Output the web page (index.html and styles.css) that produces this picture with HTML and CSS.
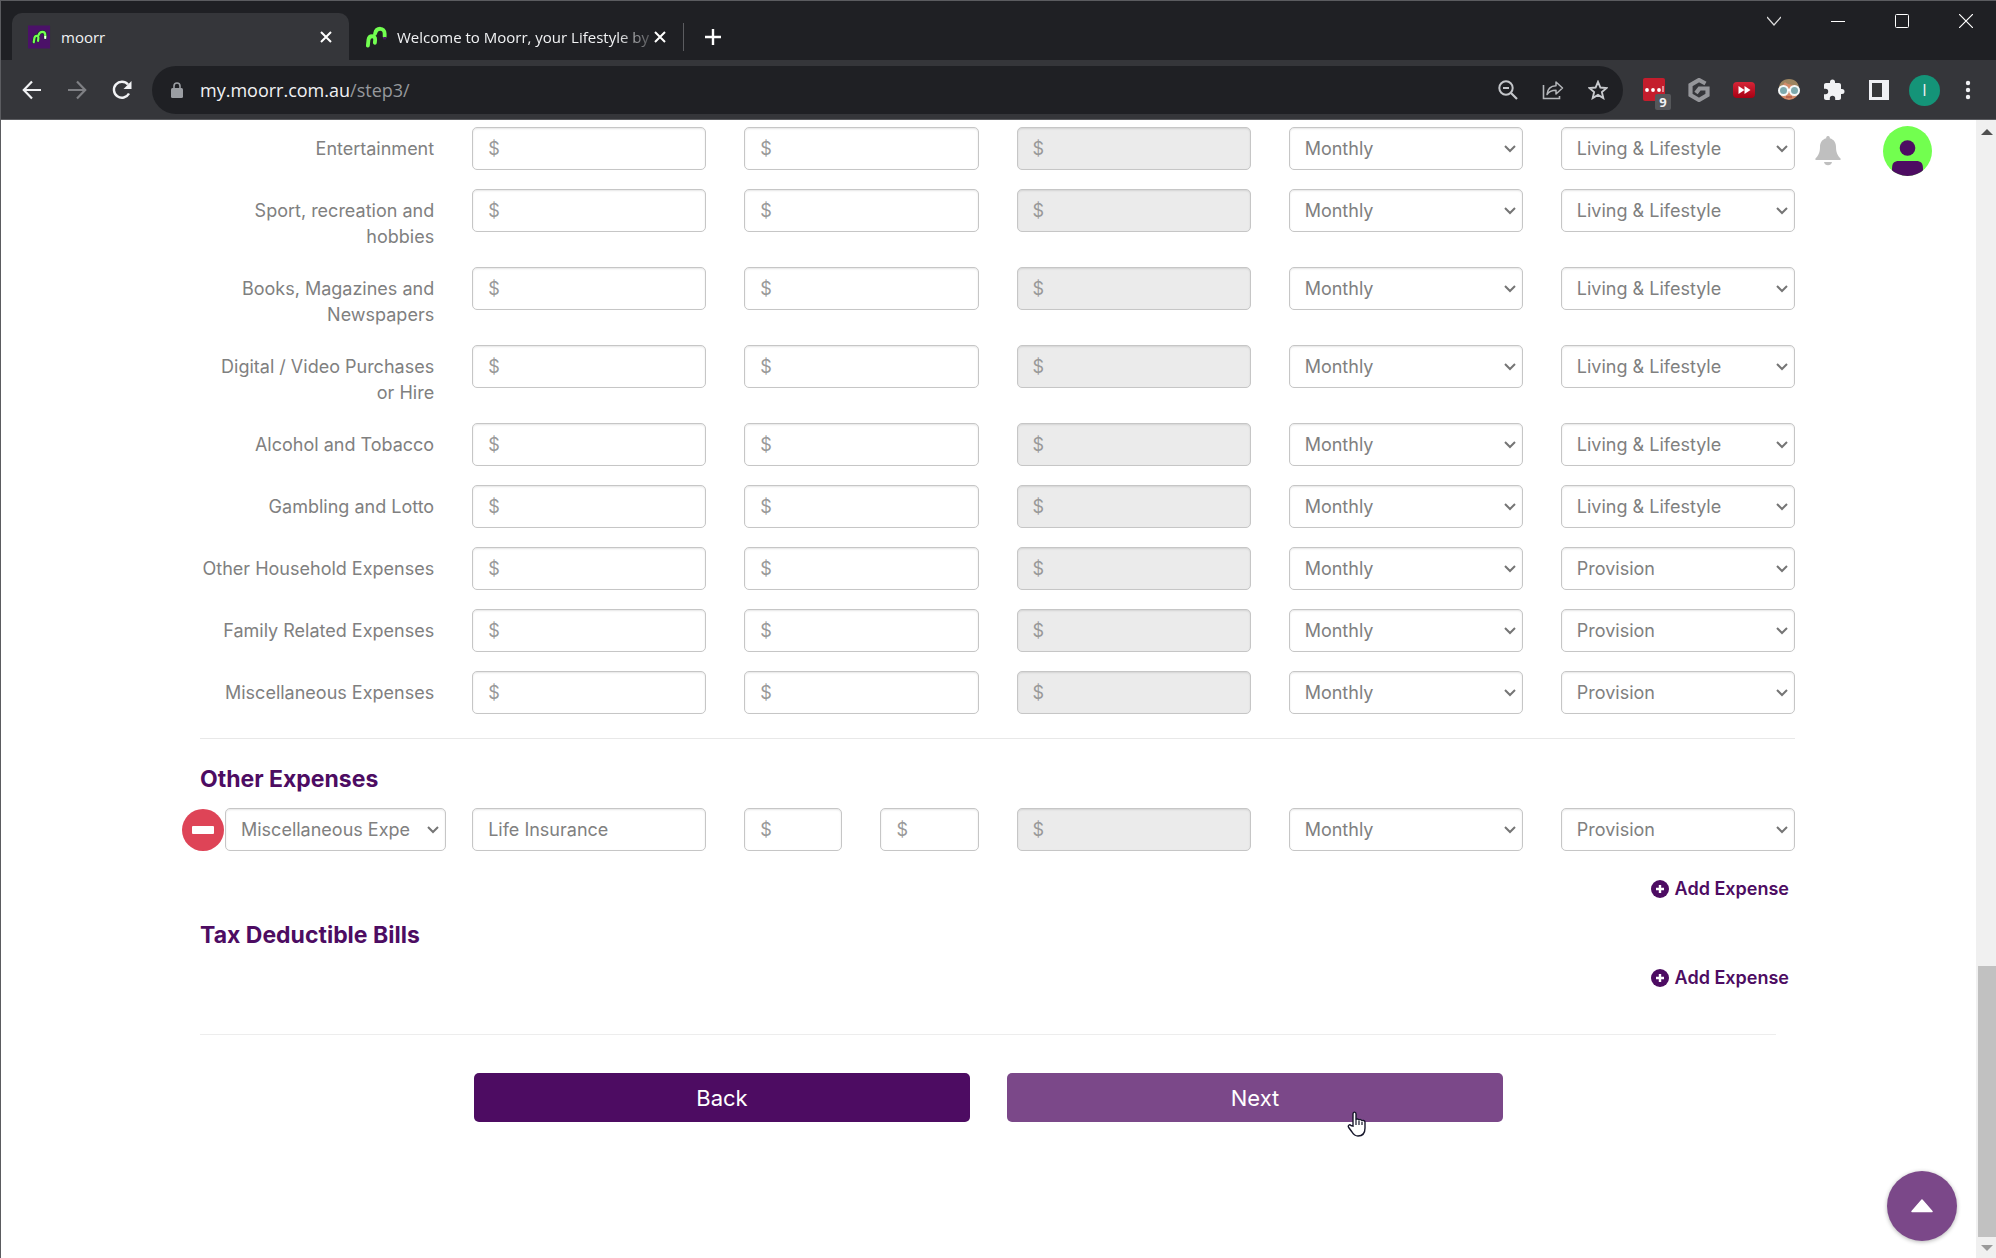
FILE: index.html
```html
<!DOCTYPE html>
<html lang="en">
<head>
<meta charset="utf-8">
<meta name="viewport" content="width=device-width, initial-scale=1">
<title>moorr</title>
<link rel="stylesheet" href="styles.css">
</head>
<body>
<div class="window">
<header class="chrome">
  <div class="tabstrip">
    <div class="tab tab-active">
      <svg class="favicon" viewBox="0 0 24 24"><path fill="#4b1168" d="M0 0h23v24H0z"/><path d="M6 17.500l1-5c.7-2.500 4-2.500 3.800 0l-.3 3M10.500 10.500c1.500-5 7.500-5.500 7.500-.5v3" fill="none" stroke="#1f2a35" stroke-width="3.600" stroke-linecap="round"/><path d="M6 17.500l.7-4.500c.7-3 4.300-3 4.100 0l-.3 3M11 10c1.500-4.500 7-4.500 7 0v2" fill="none" stroke="#72ff50" stroke-width="2.300" stroke-linecap="round"/><path d="M18 11v3" stroke="#fff" stroke-width="2"/></svg>
      <span class="tab-title">moorr</span>
      <button class="icon-btn" aria-label="Close tab"><svg width="12" height="12" viewBox="0 0 12 12"><path d="M1 1l10 10M11 1L1 11" stroke="#fff" stroke-width="2"/></svg></button>
    </div>
    <div class="tab">
      <svg class="favicon" viewBox="0 0 24 24"><path d="M3 21l.6-6c.7-5 7.400-5 7 0l-.3 3M10.500 8.500C12 1.500 20.500 2 20.500 8.500v3" fill="none" stroke="#72ff50" stroke-width="4" stroke-linecap="round"/><path d="M20.500 12v2.500" stroke="#4b1168" stroke-width="3"/></svg>
      <span class="tab-title tab-title-fade">Welcome to Moorr, your Lifestyle by</span>
      <button class="icon-btn" aria-label="Close tab"><svg width="12" height="12" viewBox="0 0 12 12"><path d="M1 1l10 10M11 1L1 11" stroke="#fff" stroke-width="2"/></svg></button>
    </div>
    <button class="icon-btn new-tab" aria-label="New tab"><svg width="18" height="18" viewBox="0 0 18 18"><path d="M9 1v16M1 9h16" stroke="#fff" stroke-width="2.400"/></svg></button>
    <div class="window-controls">
      <button class="icon-btn" aria-label="Search tabs"><svg width="14" height="14" viewBox="0 0 14 14"><path d="M0 3l7 8 7-8" fill="none" stroke="#ddd" stroke-width="1.200"/></svg></button>
      <button class="icon-btn" aria-label="Minimize"><svg width="14" height="14" viewBox="0 0 14 14"><path d="M0 7.500h14" stroke="#fff"/></svg></button>
      <button class="icon-btn" aria-label="Maximize"><svg width="14" height="14" viewBox="0 0 14 14"><rect x=".5" y=".5" width="13" height="13" rx="1" fill="none" stroke="#fff"/></svg></button>
      <button class="icon-btn" aria-label="Close window"><svg width="14" height="14" viewBox="0 0 14 14"><path d="M0 0l14 14M14 0L0 14" stroke="#fff" stroke-width="1.200"/></svg></button>
    </div>
  </div>
  <div class="toolbar">
    <button class="icon-btn nav-btn" aria-label="Back"><svg width="20" height="20" viewBox="0 0 20 20"><path d="M10 1.500L1.800 10l8.200 8.500M1.800 10H19" fill="none" stroke="#f1f2f4" stroke-width="2.200"/></svg></button>
    <button class="icon-btn nav-btn" aria-label="Forward"><svg width="20" height="20" viewBox="0 0 20 20"><path d="M10 1.500l8.200 8.500-8.200 8.500M18.200 10H1" fill="none" stroke="#7f8084" stroke-width="2.200"/></svg></button>
    <button class="icon-btn nav-btn" aria-label="Reload"><svg width="20" height="20" viewBox="0 0 20 20"><path d="M17 13.500A8 8 0 1 1 16 4.500" fill="none" stroke="#f1f2f4" stroke-width="2.400"/><path d="M19.500 1v8h-8z" fill="#f1f2f4"/></svg></button>
    <div class="omnibox">
      <svg width="12" height="16" viewBox="0 0 12 16"><rect y="6" width="12" height="10" rx="1.500" fill="#9b9ea3"/><path d="M3 7V4a3 3 0 0 1 6 0v3" fill="none" stroke="#9b9ea3" stroke-width="1.600"/></svg>
      <p class="url">my.moorr.com.au<span class="url-path">/step3/</span></p>
      <button class="icon-btn ext" aria-label="Zoom"><svg width="20" height="20" viewBox="0 0 20 20"><circle cx="8" cy="8" r="6.700" fill="none" stroke="#c4c6ca" stroke-width="2"/><path d="M5 8h6M13 13l6 6" stroke="#c4c6ca" stroke-width="2.200"/></svg></button>
      <button class="icon-btn ext" aria-label="Share"><svg width="22" height="20" viewBox="0 0 22 20"><path d="M1.500 5v13.500h16V16" fill="none" stroke="#b4b6ba" stroke-width="1.600"/><path d="M5 14.500c.5-6 4-8.500 9-8.700V2l6.500 6-6.500 6v-3.800c-4 0-7 1-9 4.300z" fill="none" stroke="#b4b6ba" stroke-width="1.500" stroke-linejoin="round"/></svg></button>
      <button class="icon-btn ext" aria-label="Bookmark"><svg width="20" height="20" viewBox="0 0 20 20"><path d="M10 1.800l2.400 5.700 6.200.5-4.700 4.100 1.400 6L10 14.900l-5.300 3.200 1.400-6L1.400 8l6.200-.5z" fill="none" stroke="#c8cace" stroke-width="1.900"/></svg></button>
    </div>
    <div class="extensions">
      <button class="icon-btn ext" aria-label="Password manager"><svg width="24" height="24" viewBox="0 0 24 24"><rect x="1" width="22" height="23" rx="2" fill="#c41d2c"/><g fill="#fff"><circle cx="5" cy="12" r="1.900"/><circle cx="11" cy="12" r="1.900"/><circle cx="17" cy="12" r="1.900"/><path d="M20.500 8h1v6h-1z"/></g></svg><span class="badge">9</span></button>
      <button class="icon-btn ext" aria-label="Grammar checker"><svg width="22" height="24" viewBox="0 0 22 24"><path d="M17.500 5.500L11 2 2.500 7v10l8.500 5 8.500-5v-6.500h-8L8 15" fill="none" stroke="#95969a" stroke-width="4.200"/></svg></button>
      <button class="icon-btn ext" aria-label="Video speed"><svg width="24" height="18" viewBox="0 0 24 18"><defs><linearGradient id="speed" x2="0" y2="1"><stop stop-color="#d52537"/><stop offset="1" stop-color="#a80013"/></linearGradient></defs><rect x="1" y="1" width="22" height="16" rx="4" fill="url(#speed)"/><path d="M6.500 5v8l6-4zM12.500 5v8l6-4z" fill="#fff"/></svg></button>
      <button class="icon-btn ext" aria-label="Reader"><svg width="24" height="24" viewBox="0 0 24 24"><circle cx="12" cy="12" r="10" fill="#d38b69"/><path d="M2 13C1 5 6 1 12 1s11 4 10 12L18 7C12 7 9 5 8 4z" fill="#9d8560"/><g fill="#7da9ad" stroke="#f5f8f8" stroke-width="2"><circle cx="6.500" cy="12.500" r="4.500"/><circle cx="17.500" cy="12.500" r="4.500"/></g><path d="M10.500 12h3" stroke="#fff" stroke-width="2"/><path d="M9 19h6" stroke="#b25a4a" stroke-width="1.500"/></svg></button>
      <button class="icon-btn ext" aria-label="Extensions"><svg width="22" height="22" viewBox="0 0 22 22"><path d="M19 10h-1V6c0-1.100-.9-2-2-2h-4V3a2.500 2.500 0 0 0-5 0v1H3c-1.100 0-2 .9-2 2v3.800h1.500a2.700 2.700 0 0 1 0 5.400H1V19c0 1.100.9 2 2 2h3.800v-1.500a2.700 2.700 0 0 1 5.400 0V21H16c1.100 0 2-.9 2-2v-4h1a2.500 2.500 0 0 0 0-5z" fill="#f1f2f4"/></svg></button>
      <button class="icon-btn ext" aria-label="Side panel"><svg width="20" height="20" viewBox="0 0 20 20"><path fill="#eeeff4" fill-rule="evenodd" d="M0 0h20v20H0zM3 3v14h10V3z"/></svg></button>
      <button class="profile" aria-label="Profile">I</button>
      <button class="icon-btn ext menu" aria-label="Menu"><svg width="6" height="20" viewBox="0 0 6 20"><g fill="#f1f2f4"><circle cx="3" cy="3" r="2.200"/><circle cx="3" cy="10" r="2.200"/><circle cx="3" cy="17" r="2.200"/></g></svg></button>
    </div>
  </div>
</header>

<div class="viewport">
  <main class="page">
    <form class="expenses">
      <div class="rows">
        <div class="row"><label for="entertainment">Entertainment</label><input id="entertainment" placeholder="$"><input aria-label="Partner" placeholder="$"><input aria-label="Total" placeholder="$" disabled><select aria-label="Frequency"><option>Monthly</option></select><select aria-label="Category"><option>Living &amp; Lifestyle</option></select></div>
        <div class="row"><label for="sport">Sport, recreation and<br>hobbies</label><input id="sport" placeholder="$"><input aria-label="Partner" placeholder="$"><input aria-label="Total" placeholder="$" disabled><select aria-label="Frequency"><option>Monthly</option></select><select aria-label="Category"><option>Living &amp; Lifestyle</option></select></div>
        <div class="row"><label for="books">Books, Magazines and<br>Newspapers</label><input id="books" placeholder="$"><input aria-label="Partner" placeholder="$"><input aria-label="Total" placeholder="$" disabled><select aria-label="Frequency"><option>Monthly</option></select><select aria-label="Category"><option>Living &amp; Lifestyle</option></select></div>
        <div class="row"><label for="digital">Digital / Video Purchases<br>or Hire</label><input id="digital" placeholder="$"><input aria-label="Partner" placeholder="$"><input aria-label="Total" placeholder="$" disabled><select aria-label="Frequency"><option>Monthly</option></select><select aria-label="Category"><option>Living &amp; Lifestyle</option></select></div>
        <div class="row"><label for="alcohol">Alcohol and Tobacco</label><input id="alcohol" placeholder="$"><input aria-label="Partner" placeholder="$"><input aria-label="Total" placeholder="$" disabled><select aria-label="Frequency"><option>Monthly</option></select><select aria-label="Category"><option>Living &amp; Lifestyle</option></select></div>
        <div class="row"><label for="gambling">Gambling and Lotto</label><input id="gambling" placeholder="$"><input aria-label="Partner" placeholder="$"><input aria-label="Total" placeholder="$" disabled><select aria-label="Frequency"><option>Monthly</option></select><select aria-label="Category"><option>Living &amp; Lifestyle</option></select></div>
        <div class="row"><label for="household">Other Household Expenses</label><input id="household" placeholder="$"><input aria-label="Partner" placeholder="$"><input aria-label="Total" placeholder="$" disabled><select aria-label="Frequency"><option>Monthly</option></select><select aria-label="Category"><option>Provision</option></select></div>
        <div class="row"><label for="family">Family Related Expenses</label><input id="family" placeholder="$"><input aria-label="Partner" placeholder="$"><input aria-label="Total" placeholder="$" disabled><select aria-label="Frequency"><option>Monthly</option></select><select aria-label="Category"><option>Provision</option></select></div>
        <div class="row"><label for="misc">Miscellaneous Expenses</label><input id="misc" placeholder="$"><input aria-label="Partner" placeholder="$"><input aria-label="Total" placeholder="$" disabled><select aria-label="Frequency"><option>Monthly</option></select><select aria-label="Category"><option>Provision</option></select></div>
      </div>

      <section class="group">
        <h2>Other Expenses</h2>
        <div class="row row-other">
          <div class="kind">
            <button type="button" class="remove" aria-label="Remove expense"></button>
            <select aria-label="Expense type"><option>Miscellaneous Expe</option></select>
          </div>
          <input aria-label="Description" value="Life Insurance">
          <div class="pair"><input aria-label="Your amount" placeholder="$"><input aria-label="Partner amount" placeholder="$"></div>
          <input aria-label="Total" placeholder="$" disabled>
          <select aria-label="Frequency"><option>Monthly</option></select>
          <select aria-label="Category"><option>Provision</option></select>
        </div>
        <button type="button" class="add"><svg width="18" height="18" viewBox="0 0 18 18"><circle cx="9" cy="9" r="9" fill="#4d0c62"/><path d="M9 5v8M5 9h8" stroke="#fff" stroke-width="2.400"/></svg>Add Expense</button>
      </section>

      <section class="group-tax">
        <h2>Tax Deductible Bills</h2>
        <button type="button" class="add"><svg width="18" height="18" viewBox="0 0 18 18"><circle cx="9" cy="9" r="9" fill="#4d0c62"/><path d="M9 5v8M5 9h8" stroke="#fff" stroke-width="2.400"/></svg>Add Expense</button>
      </section>

      <div class="actions">
        <button type="button" class="action">Back</button>
        <button type="button" class="action action-hover">Next<svg class="pointer" width="20" height="26" viewBox="0 0 20 26"><path d="M6 15V3c0-2.500 3-2.500 3 0v6c0-1.500 3-1.500 3 .5 0-1.500 3-1.200 3 .7 0-1.300 3-1 3 1V17c0 5-2.500 8-7 8-3.500 0-4.500-1.500-6-4l-3.300-4.500c-1.200-2 .8-3.500 2.300-2z" fill="#fff" stroke="#16162a" stroke-width="1.400"/><path d="M9 9v5M12 10v4M15 11v3" stroke="#16162a" stroke-width="1.200"/></svg></button>
      </div>
    </form>

    <aside class="account">
      <button class="icon-btn" aria-label="Notifications"><svg width="26" height="30" viewBox="0 0 26 30"><path d="M13 0a1.700 1.700 0 0 1 1.700 2.300C19.500 3.500 21 7.500 21 11c0 6 2 9 4.500 11.500.5.600.2 1.500-.6 1.500H1.100c-.8 0-1.100-.9-.6-1.500C3 20 5 17 5 11c0-3.500 1.500-7.500 6.300-8.700A1.700 1.700 0 0 1 13 0zM9 26h8c-.5 2.200-2 3.200-4 3.200S9.500 28.200 9 26z" fill="#bfbfbf"/></svg></button>
      <button class="icon-btn" aria-label="Account"><svg width="49" height="50" viewBox="0 0 49 50"><defs><clipPath id="face"><ellipse cx="24.500" cy="25" rx="24.500" ry="25"/></clipPath></defs><g clip-path="url(#face)"><path fill="#72ff4f" d="M0 0h49v50H0z"/><circle cx="24.500" cy="22" r="7.800" fill="#4d0c62"/><path d="M9 50v-7c0-6 2-8 7-8h17c5 0 7 2 7 8v7z" fill="#4d0c62"/></g></svg></button>
    </aside>
    <button class="to-top" aria-label="Back to top"><svg width="22" height="14" viewBox="0 0 22 14"><path d="M11 1l10 11.500H1z" fill="#fff" stroke="#fff" stroke-width="1.500" stroke-linejoin="round"/></svg></button>
  </main>
  <div class="scrollbar">
    <svg width="12" height="6" viewBox="0 0 12 6"><path d="M6 0l6 6H0z" fill="#505050"/></svg>
    <div class="thumb"></div>
    <svg width="12" height="6" viewBox="0 0 12 6"><path d="M6 6l6-6H0z" fill="#9a9a9a"/></svg>
  </div>
</div>
</div>
</body>
</html>
```
FILE: styles.css
```css
* {
  box-sizing: border-box;
}

body {
  margin: 0;
  background: #fff;
  color: #808080;
  font: 18px/26px Inter, "Open Sans", sans-serif;
}

button {
  margin: 0;
  padding: 0;
  border: 0;
  background: none;
  color: inherit;
  font: inherit;
}

svg {
  display: block;
  flex: none;
}

.window {
  display: flex;
  flex-direction: column;
  height: 100vh;
  border: solid #5b5c60;
  border-width: 1px 0 0 1px;
  overflow: hidden;
}

/* Browser chrome */
.chrome {
  flex: none;
  background: #35363a;
  border-bottom: 1px solid #5b5c60;
  color: #f1f2f4;
  font-family: "Open Sans", sans-serif;
}

.tabstrip {
  display: flex;
  height: 59px;
  padding: 12px 0 0 11px;
  background: #1f2024;
}

.icon-btn {
  display: flex;
  align-items: center;
  justify-content: center;
}

.tab {
  display: flex;
  align-items: center;
  width: 334px;
  padding: 0 17px 0 16px;
  font-size: 15px;
  line-height: 24px;
  white-space: nowrap;
}

.tab-active {
  width: 337px;
  border-radius: 10px 10px 0 0;
  background: #35363a;
}

.favicon {
  width: 23px;
  height: 24px;
}

.tab-title {
  flex: 1;
  margin: 0 2px 0 10px;
}

.tab-title-fade {
  margin-left: 9px;
  mask-image: linear-gradient(to right, #000 220px, rgba(0, 0, 0, 0.3) 250px);
}

.new-tab {
  align-self: center;
  height: 28px;
  padding-left: 20px;
  border-left: 1px solid #5b5c60;
}

.window-controls {
  display: flex;
  gap: 50px;
  height: 16px;
  margin-left: auto;
  padding-right: 23px;
}

.toolbar {
  display: flex;
  align-items: center;
  height: 59px;
  padding: 1px 16px 0 8px;
}

.nav-btn {
  width: 45px;
}

.omnibox {
  display: flex;
  flex: 1;
  align-items: center;
  height: 48px;
  margin-left: 8px;
  padding: 0 3px 0 19px;
  border-radius: 24px;
  background: #1f2024;
}

.url {
  flex: 1;
  margin: 0 0 0 17px;
  font-size: 18px;
}

.url-path {
  color: #96989c;
}

.ext {
  position: relative;
  width: 45px;
  height: 45px;
}

.extensions {
  display: flex;
  align-items: center;
  margin-left: 8px;
}

.badge {
  position: absolute;
  top: 26px;
  right: 5px;
  width: 16px;
  height: 16px;
  border-radius: 2px;
  background: #55575a;
  font-size: 13px;
  font-weight: 700;
  line-height: 16px;
}

.profile {
  width: 31px;
  height: 31px;
  margin: 0 8px;
  border-radius: 50%;
  background: #149478;
  font-size: 16px;
  line-height: 31px;
}

.extensions .menu {
  width: 24px;
  margin-left: 8px;
}

/* Page */
.viewport {
  display: flex;
  flex: 1;
  min-height: 0;
}

.page {
  position: relative;
  flex: 1;
  overflow: hidden;
}

.expenses {
  margin: 0 181px 0 199px;
  padding-top: 7px;
}

.rows {
  display: grid;
  gap: 17px;
  padding-bottom: 22px;
  border-bottom: 1px solid #e8e8e8;
}

.row {
  display: grid;
  grid-template-columns: repeat(6, minmax(0, 1fr));
  column-gap: 38px;
  align-items: start;
  min-height: 45px;
}

label {
  padding-top: 9px;
  text-align: right;
  white-space: nowrap;
}

input,
select {
  width: 100%;
  min-width: 0;
  height: 43px;
  margin: 0;
  padding: 0 15px;
  border: 1px solid #c6c6c6;
  border-radius: 5px;
  background: #fff;
  box-shadow: inset 0 1px 2px rgba(0, 0, 0, 0.1);
  color: #808080;
  font: inherit;
}

input::placeholder {
  color: #999;
  opacity: 1;
}

input:disabled {
  background: #ebebeb;
}

select {
  appearance: none;
  background: #fff url("data:image/svg+xml,%3Csvg xmlns='http://www.w3.org/2000/svg' width='12' height='8'%3E%3Cpath d='M1 1l5 5 5-5' fill='none' stroke='%23757575' stroke-width='2'/%3E%3C/svg%3E") no-repeat right 6px center;
}

h2 {
  margin: 0;
  color: #4d0c62;
  font-size: 23px;
  font-weight: 700;
  line-height: 34px;
}

.group {
  padding-top: 23px;
}

.row-other {
  padding-top: 12px;
}

.kind {
  display: flex;
  align-items: center;
  gap: 1px;
  margin: 0 -12px 0 -18px;
}

.remove {
  display: flex;
  flex: none;
  align-items: center;
  justify-content: center;
  width: 42px;
  height: 42px;
  border-radius: 50%;
  background: #de4457;
}

.remove::before {
  width: 22px;
  height: 8px;
  border-radius: 1px;
  background: #fff;
  content: "";
}

.pair {
  display: grid;
  grid-template-columns: 1fr 1fr;
  gap: 38px;
}

.add {
  display: flex;
  align-items: center;
  gap: 6px;
  margin: 25px 6px 0 auto;
  color: #4d0c62;
  font-weight: 600;
}

.group-tax {
  margin-right: 19px;
  padding: 16px 0 43px;
  border-bottom: 1px solid #ededed;
}

.group-tax .add {
  margin: 13px -13px 0 auto;
}

.actions {
  display: grid;
  grid-template-columns: 1fr 1fr;
  gap: 37px;
  margin: 38px 292px 0 274px;
}

.action {
  position: relative;
  height: 49px;
  border-radius: 5px;
  background: #4d0c62;
  color: #fff;
  font-size: 22px;
}

.action-hover {
  background: #7b4889;
}

.pointer {
  position: absolute;
  right: 136px;
  bottom: -15px;
}

.account {
  position: absolute;
  top: 6px;
  right: 44px;
  display: flex;
  gap: 42px;
}

.to-top {
  position: absolute;
  right: 19px;
  bottom: 17px;
  display: flex;
  align-items: center;
  justify-content: center;
  width: 70px;
  height: 70px;
  border-radius: 50%;
  background: #7b4889;
  box-shadow: 0 1px 4px rgba(0, 0, 0, 0.3);
}

.scrollbar {
  display: flex;
  flex: none;
  flex-direction: column;
  align-items: center;
  width: 20px;
  padding: 9px 0 7px 2px;
  background: #f0f0f0;
}

.thumb {
  width: 100%;
  height: 271px;
  margin: auto 0 8px;
  background: #c1c1c1;
}
```
